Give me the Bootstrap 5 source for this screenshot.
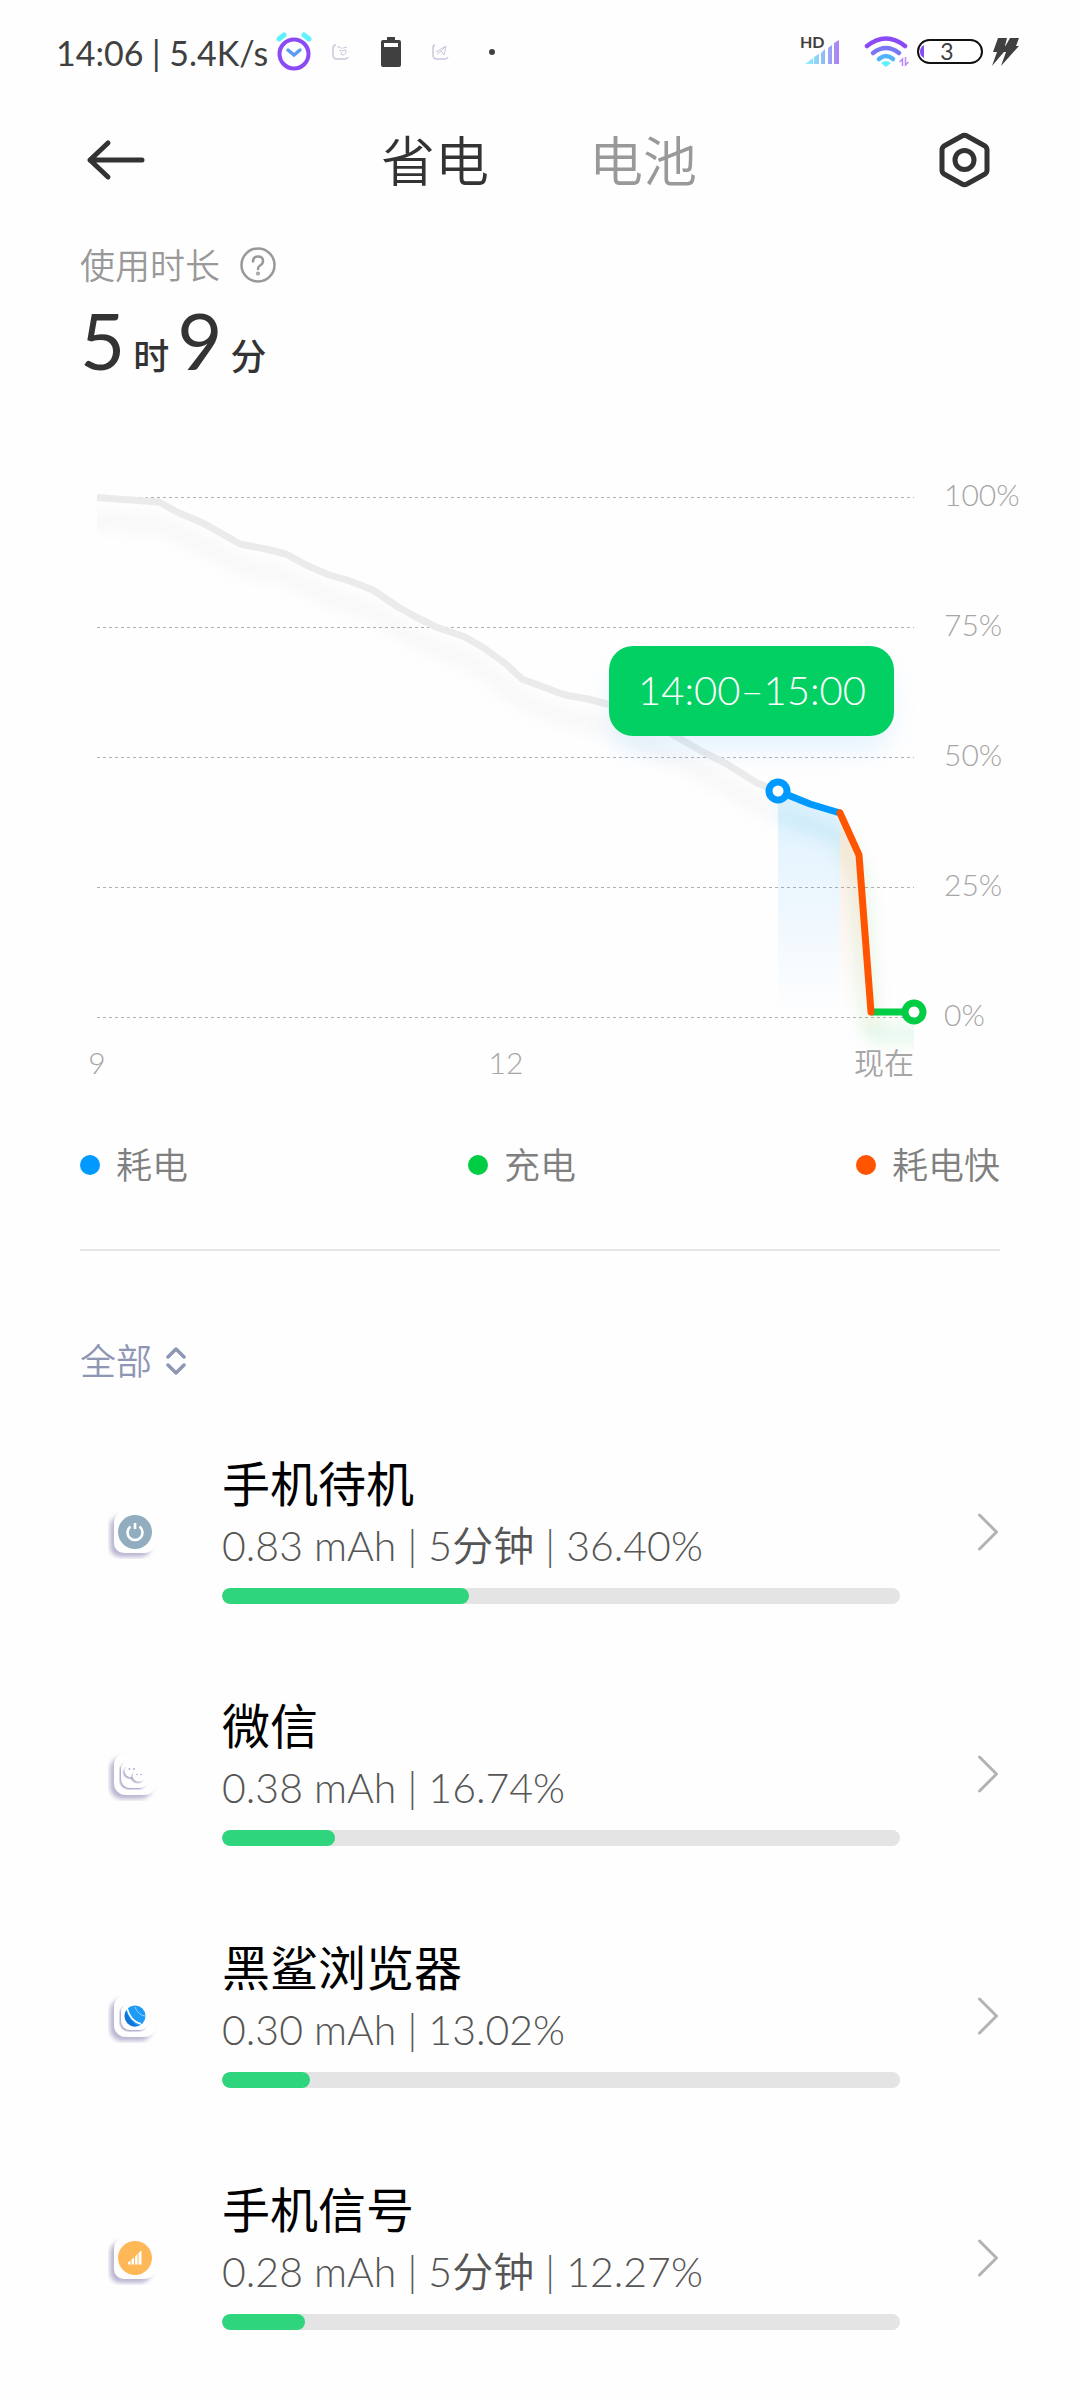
<!DOCTYPE html>
<html lang="zh-CN">
<head>
<meta charset="utf-8">
<meta name="viewport" content="width=device-width, initial-scale=1">
<title>省电</title>
<link href="https://cdn.jsdelivr.net/npm/bootstrap@5.3.0/dist/css/bootstrap.min.css" rel="stylesheet">
<style>
  body { background: #fefefe; color: #333; font-family: Lato, "Noto Sans CJK SC", sans-serif; font-weight: 350; }
  svg { display: block; flex: none; }
  .gutter { padding-left: 80px; padding-right: 80px; }
  .statusbar { height: 104px; padding: 0 58px 0 56px; color: #404040; font-size: 34px; font-weight: 400; }
  .topbar { height: 112px; }
  .topbar button { background: none; border: 0; padding: 0; }
  .tabs-main { gap: 100px; padding-top: 4px; }
  .tabs-main a { font-size: 54px; line-height: 72px; color: #999; text-decoration: none; }
  .tabs-main a.active { color: #333; }
  .usage { padding-top: 24px; }
  .usage-label { font-size: 35px; line-height: 50px; color: #999; gap: 20px; }
  .usage-label button { background: none; border: 0; padding: 0; }
  .usage-time { height: 100px; line-height: 100px; font-size: 78px; font-weight: 400; color: #333; }
  .usage-time small { font-size: 36px; font-weight: 500; margin: 0 8px; }
  .history { margin-top: 70px; width: 100%; height: auto; }
  .history text { font-size: 30px; fill: #a6a6a6; }
  .history .bubble-text { font-size: 40px; fill: #fff; }
  .legend-row { margin-top: 40px; font-size: 36px; line-height: 50px; color: #808080; }
  .legend-row li { gap: 16px; }
  .dot { width: 20px; height: 20px; border-radius: 50%; }
  .dot-use { background: #09f; } .dot-charge { background: #0c4; } .dot-fast { background: #f50; }
  .rule { height: 2px; margin-top: 59px; background: #e6e6e6; }
  .filter { margin: 85px 0 25px; gap: 12px; height: 50px; }
  .filter select { appearance: none; background: none; border: 0; padding: 0; width: 74px; color: #8e96b3; font-size: 36px; line-height: 50px; font-weight: 350; }
  .app-row { padding: 41px 0; color: #000; text-decoration: none; }
  .app-icon { width: 142px; padding-left: 28px; }
  .app-body { padding-right: 78px; height: 160px; }
  .app-name { font-size: 48px; line-height: 64px; font-weight: 400; }
  .app-info { font-size: 41px; line-height: 60px; margin-bottom: 12px; color: #555; }
  .meter { height: 16px; border-radius: 8px; background: #e4e4e4; }
  .meter .progress-bar { border-radius: 8px; background: #2fd57c; }
  .s-alarm { margin-left: 8px; } .s-note { margin-left: 20px; } .s-batt { margin-left: 31px; }
</style>
<script src="https://cdn.jsdelivr.net/npm/bootstrap@5.3.0/dist/js/bootstrap.bundle.min.js"></script>
</head>
<body>
<svg width="0" height="0" class="position-absolute" aria-hidden="true">
  <defs>
    <filter id="tileShade" x="-50%" y="-50%" width="200%" height="200%"><feDropShadow dx="-4" dy="4" stdDeviation="2" flood-color="#8f86b4" flood-opacity=".6"/></filter>
    <filter id="innerShade" x="-50%" y="-50%" width="200%" height="200%"><feDropShadow dx="-1.5" dy="1.5" stdDeviation=".7" flood-color="#8f86b4" flood-opacity=".65"/></filter>
    <linearGradient id="sig" gradientUnits="userSpaceOnUse" x1="805" x2="840" y1="0" y2="0"><stop offset="0" stop-color="#8ff6ff"/><stop offset=".5" stop-color="#8cc0f5"/><stop offset="1" stop-color="#b07cf5"/></linearGradient>
  </defs>
</svg>

<header>
  <div class="statusbar d-flex align-items-center justify-content-between">
    <div class="d-flex align-items-center">
      <span>14:06 | 5.4K/s</span>
      <svg class="s-alarm" width="36" height="40" viewBox="0 0 36 40" fill="none" stroke-linecap="round"><path d="M3 7l5-4M28 3l5 4" stroke="#5ff2fb" stroke-width="5"/><circle cx="18" cy="22" r="14.500" stroke="#8a4af6" stroke-width="4"/><path d="M12 18l6 5 6-5" stroke="#5a9cf2" stroke-width="3.500"/></svg>
      <svg class="s-note" width="18" height="18" viewBox="0 0 18 18" fill="none" stroke="#cbc6dc"><path d="M4 2Q1 2 1 5v7q0 4 4 4h8q2 0 3-2" stroke-width="1.500"/><path d="M5 4q4-1 5 2M11 5l4-1M7 7l3 1M10 8l4-1q0 5-3 5t-2-3" stroke-width="1"/></svg>
      <svg class="s-batt" width="20" height="30" viewBox="0 0 20 30"><path fill="#404040" d="M6 0h8v3h4q2 0 2 2v23q0 2-2 2H2q-2 0-2-2V5q0-2 2-2h4z"/><path fill="#fefefe" d="M3 6h14v4H3z"/></svg>
      <svg class="s-batt" width="18" height="18" viewBox="0 0 18 18" fill="none" stroke="#cbc6dc"><path d="M3 2Q1 2 1 5v7q0 4 4 4h8q2 0 3-2" stroke-width="1.500"/><path d="M4 9l10-6-2 9-3-4-4 3M14 3l-5 5" stroke-width="1"/></svg>
      <svg class="ms-4" width="40" height="8" viewBox="0 0 40 8"><circle cx="18" cy="4" r="3" fill="#404040"/></svg>
    </div>
    <svg width="224" height="40" viewBox="798 32 224 40">
      <text x="800" y="48" font-size="16" font-weight="700" fill="#404040">HD</text>
      <path fill="url(#sig)" d="M805 64l8-6v6zM814 57l5-3v10h-5zM821 53l4-4v15h-4zM828 48l4-3v19h-4zM834 43l5-3v24h-5z"/>
      <g fill="none" stroke-linecap="round" stroke-width="4.500"><path d="M867 46q19-15 38 0" stroke="#8a4af6"/><path d="M873 53q13-10 26 0" stroke="#7877f4"/><path d="M879 59q7-6 14 0" stroke="#4fb4fb"/></g>
      <path fill="#5ff2fb" d="M881 63q5-4 10 0l-5 4z"/>
      <path fill="none" stroke="#b98af5" stroke-width="1.500" d="M899.500 62l3-3v7M905.500 57v8l3-3"/>
      <rect x="918" y="40" width="64" height="23" rx="11.500" fill="#fff" stroke="#111" stroke-width="2"/>
      <path fill="#8a4af6" d="M924 45v13q-4-2-4-6.500t4-6.500z"/>
      <text x="947" y="60" text-anchor="middle" font-size="23" font-weight="400" fill="#404040">3</text>
      <path fill="#404040" d="M998 38h9l-2 8h4l-17 20 5-14h-4zM1010 38h9l-3 8h3l-18 20 5-14h-4z"/><path d="M1001 46h8v4h-8z" fill="#404040"/>
    </svg>
  </div>

  <div class="topbar gutter d-flex align-items-center justify-content-between">
    <button type="button" aria-label="返回"><svg width="68" height="54" viewBox="0 0 68 54" fill="none" stroke="#333" stroke-width="5" stroke-linecap="round" stroke-linejoin="round"><path d="M62 27H10M28 10L10 27l18 17"/></svg></button>
    <nav class="tabs-main d-flex">
      <a href="#" class="active" aria-current="page">省电</a>
      <a href="#">电池</a>
    </nav>
    <button type="button" aria-label="设置"><svg width="70" height="56" viewBox="0 0 70 56" fill="none" stroke="#333" stroke-width="5" stroke-linejoin="round"><path d="M32 4q2.500-1.500 5 0l18 10q2 1.500 2 4v20q0 2.500-2 4L37 52q-2.500 1.500-5 0L14 42q-2-1.500-2-4V18q0-2.500 2-4z"/><circle cx="34.500" cy="28" r="9.500"/></svg></button>
  </div>
</header>

<main>
  <section class="usage gutter">
    <div class="usage-label d-flex align-items-center">
      <span>使用时长</span>
      <button type="button" aria-label="说明"><svg width="36" height="36" viewBox="0 0 36 36" fill="none" stroke="#999" stroke-width="2.500" stroke-linecap="round"><circle cx="18" cy="18" r="16.500"/><path d="M13 14.500q0-5 5-5t5 4.500q0 3-3 4.500-2 1.200-2 3.500"/><circle cx="18" cy="26.500" r=".7"/></svg></button>
    </div>
    <div class="usage-time">5<small>时</small>9<small>分</small></div>
  </section>

  <svg class="history" viewBox="0 460 1080 640" role="img" aria-label="电量曲线">
    <defs>
      <linearGradient id="fade" x1="0" y1="0" x2="0" y2="1"><stop offset="0" stop-color="#09f" stop-opacity=".13"/><stop offset="1" stop-color="#09f" stop-opacity="0"/></linearGradient>
      <linearGradient id="fadeHot" x1="0" y1="0" x2="0" y2="1"><stop offset="0" stop-color="#f50" stop-opacity=".11"/><stop offset="1" stop-color="#f50" stop-opacity="0"/></linearGradient>
      <filter id="soft" filterUnits="userSpaceOnUse" x="60" y="460" width="960" height="640"><feGaussianBlur stdDeviation="8"/></filter>
      <filter id="glow" x="-20%" y="-50%" width="140%" height="220%"><feGaussianBlur stdDeviation="14"/></filter>
      <clipPath id="plot"><path d="M97 460h817v640H97z"/></clipPath>
    </defs>
    <path d="M97 497.500H914M97 627.500H914M97 757.500H914M97 887.500H914M97 1017.500H914" stroke="#b0b0b0" stroke-dasharray="3 3"/>
    <g clip-path="url(#plot)" fill="none">
      <g filter="url(#soft)" stroke-width="16" transform="translate(0 22)">
        <path stroke="#000" stroke-opacity=".026" d="M80 497L159 502 203 523 240 544 286 554 329 575 373 590 416 617 465 637 484 648 522 679 565 695 607 704 677 737 725 763 757 783 778 791"/>
        <path stroke="#09c" stroke-opacity=".1" d="M778 791L810 804 840 813"/>
        <path stroke="#391" stroke-opacity=".1" d="M840 813L859 855 871 1012"/>
        <path stroke="#0b3" stroke-opacity=".1" d="M871 1012H930"/>
      </g>
      <path fill="url(#fade)" d="M778 791L810 804 840 813V1017H778z"/>
      <path fill="url(#fadeHot)" d="M840 813L859 855 871 1012H840z"/>
    </g>
    <g fill="none" stroke-width="7" stroke-linejoin="round">
      <path stroke="#ebebeb" d="M97 497.500L159 502 177 512 203 523 240 544 266 549 286 554 306 565 329 575 347 580 373 590 398 607 416 617 436 627 465 637 484 648 506 664 522 679 565 695 588 699 607 704 640 716 677 737 703 752 725 763 757 783 778 791"/>
      <path stroke="#09f" d="M778 791L810 804 840 813"/>
      <path stroke="#0c4" d="M871 1012H914"/>
      <path stroke="#f50" stroke-linecap="round" d="M840 813L859 855 871 1012"/>
    </g>
    <circle cx="778" cy="791" r="9" fill="#fff" stroke="#09f" stroke-width="7"/>
    <circle cx="914" cy="1012" r="9" fill="#fff" stroke="#0c4" stroke-width="7"/>
    <rect x="612" y="664" width="279" height="86" rx="24" fill="#09f" opacity=".1" filter="url(#glow)"/>
    <rect x="609" y="646" width="285" height="90" rx="24" fill="#03d062"/>
    <text class="bubble-text" x="752" y="705" text-anchor="middle">14:00–15:00</text>
    <text x="944" y="506">100%</text><text x="944" y="636">75%</text><text x="944" y="766">50%</text><text x="944" y="896">25%</text><text x="944" y="1026">0%</text>
    <text x="97" y="1074" text-anchor="middle">9</text><text x="506" y="1074" text-anchor="middle">12</text><text x="914" y="1074" text-anchor="end">现在</text>
  </svg>

  <section class="gutter">
    <ul class="legend-row list-unstyled d-flex justify-content-between mb-0">
      <li class="d-flex align-items-center"><span class="dot dot-use"></span>耗电</li>
      <li class="d-flex align-items-center"><span class="dot dot-charge"></span>充电</li>
      <li class="d-flex align-items-center"><span class="dot dot-fast"></span>耗电快</li>
    </ul>
    <div class="rule"></div>
    <div class="filter d-flex align-items-center">
      <select id="scope" aria-label="筛选"><option>全部</option></select>
      <label for="scope"><svg width="20" height="30" viewBox="0 0 20 30" fill="none" stroke="#8e96b3" stroke-width="3.500" stroke-linecap="round" stroke-linejoin="round"><path d="M2 11l8-8 8 8M2 19l8 8 8-8"/></svg></label>
    </div>

    <div>
      <a href="#" class="app-row d-flex align-items-center">
        <span class="app-icon"><svg width="54" height="54" viewBox="0 0 54 54"><rect x="6" y="7" width="41" height="41" rx="10" fill="#fefefe" filter="url(#tileShade)"/><circle cx="27" cy="27" r="17" fill="#91adbf"/><path d="M22.500 21.500a7.500 7.500 0 1 0 9 0M27 18v6" fill="none" stroke="#fff" stroke-width="2.600"/></svg></span>
        <span class="app-body flex-grow-1"><span class="app-name d-block">手机待机</span><span class="app-info d-block">0.83 mAh | 5分钟 | 36.40%</span><span class="progress meter"><span class="progress-bar" style="width:36.40%"></span></span></span>
        <svg width="22" height="42" viewBox="0 0 22 42" fill="none" stroke="#b3b3b3" stroke-width="3" stroke-linecap="round" stroke-linejoin="round"><path d="M1.500 4l17 17-17 17"/></svg>
      </a>
      <a href="#" class="app-row d-flex align-items-center">
        <span class="app-icon"><svg width="54" height="54" viewBox="0 0 54 54"><rect x="6" y="6" width="42" height="42" rx="12" fill="#fefefe" filter="url(#tileShade)"/><rect x="13" y="13" width="28" height="28" rx="9" fill="#fefefe" filter="url(#innerShade)"/><path d="M15 13h28v27H30z" fill="#fefefe" opacity=".55"/><g fill="#fefefe" filter="url(#innerShade)"><ellipse cx="24" cy="24" rx="7.500" ry="6.500"/></g><g fill="#fefefe" filter="url(#innerShade)"><ellipse cx="31" cy="29" rx="6.500" ry="5.500"/></g><g fill="#a9a3c4"><circle cx="21.500" cy="22" r=".9"/><circle cx="26" cy="22" r=".9"/><circle cx="29" cy="27.500" r=".8"/><circle cx="33" cy="27.500" r=".8"/></g></svg></span>
        <span class="app-body flex-grow-1"><span class="app-name d-block">微信</span><span class="app-info d-block">0.38 mAh | 16.74%</span><span class="progress meter"><span class="progress-bar" style="width:16.74%"></span></span></span>
        <svg width="22" height="42" viewBox="0 0 22 42" fill="none" stroke="#b3b3b3" stroke-width="3" stroke-linecap="round" stroke-linejoin="round"><path d="M1.500 4l17 17-17 17"/></svg>
      </a>
      <a href="#" class="app-row d-flex align-items-center">
        <span class="app-icon"><svg width="54" height="54" viewBox="0 0 54 54"><rect x="6" y="6" width="42" height="42" rx="12" fill="#fefefe" filter="url(#tileShade)"/><rect x="13" y="14" width="28" height="27" rx="9" fill="#fefefe" filter="url(#innerShade)"/><circle cx="27" cy="27" r="10.500" fill="#1d9bf6"/><path d="M18 22a10.500 10.500 0 0 0 12 15q-8-4-12-15z" fill="#1273d8"/><path d="M19 19q3 13 14 16" fill="none" stroke="#fff" stroke-width="1.600"/><path d="M27 18q3 8 10 9" fill="none" stroke="#8fd0ff"/></svg></span>
        <span class="app-body flex-grow-1"><span class="app-name d-block">黑鲨浏览器</span><span class="app-info d-block">0.30 mAh | 13.02%</span><span class="progress meter"><span class="progress-bar" style="width:13.02%"></span></span></span>
        <svg width="22" height="42" viewBox="0 0 22 42" fill="none" stroke="#b3b3b3" stroke-width="3" stroke-linecap="round" stroke-linejoin="round"><path d="M1.500 4l17 17-17 17"/></svg>
      </a>
      <a href="#" class="app-row d-flex align-items-center">
        <span class="app-icon"><svg width="54" height="54" viewBox="0 0 54 54"><rect x="6" y="7" width="41" height="41" rx="10" fill="#fefefe" filter="url(#tileShade)"/><circle cx="27" cy="27" r="17" fill="#ffb858"/><path d="M20 33.500v-2l2.500-2v4zM23.500 33.500v-5l2.500-2v7zM27 33.500v-8l2.500-2.500v10.500zM30.500 33.500V22l3-2.500v14z" fill="#fff"/></svg></span>
        <span class="app-body flex-grow-1"><span class="app-name d-block">手机信号</span><span class="app-info d-block">0.28 mAh | 5分钟 | 12.27%</span><span class="progress meter"><span class="progress-bar" style="width:12.27%"></span></span></span>
        <svg width="22" height="42" viewBox="0 0 22 42" fill="none" stroke="#b3b3b3" stroke-width="3" stroke-linecap="round" stroke-linejoin="round"><path d="M1.500 4l17 17-17 17"/></svg>
      </a>
    </div>
  </section>
</main>
</body>
</html>
